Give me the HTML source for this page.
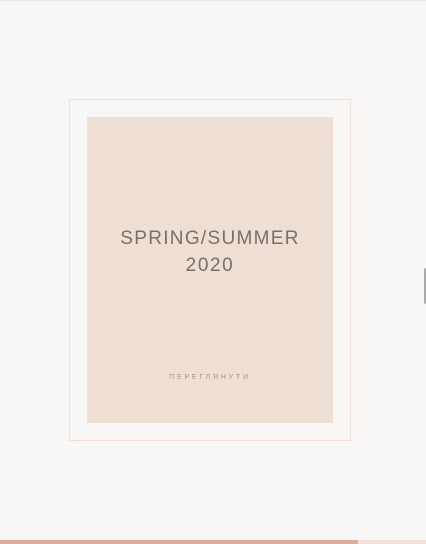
<!DOCTYPE html>
<html><head><meta charset="utf-8"><style>
html,body{margin:0;padding:0;width:426px;height:544px;overflow:hidden;background:#f9f7f5;}
body{position:relative;font-family:"Liberation Sans",sans-serif;}
.top{position:absolute;left:0;top:0;width:426px;height:1px;background:#ebe8e5;}
.frame{position:absolute;left:69px;top:99px;width:280px;height:340px;border:1px solid #f2ddd0;}
.box{position:absolute;left:87px;top:117px;width:246px;height:306px;background:#efdfd3;}
.t1{position:absolute;left:0;width:246px;text-align:center;top:111px;font-size:19px;letter-spacing:1.3px;color:#75706d;line-height:22px;}
.t2{position:absolute;left:0;width:246px;text-align:center;top:138px;font-size:19px;letter-spacing:1.6px;color:#75706d;line-height:22px;}
.t3{position:absolute;left:0;width:246px;text-align:center;top:256px;font-size:7px;letter-spacing:2.8px;color:#9c9490;line-height:10px;}
.knob{position:absolute;left:424px;top:268px;width:3px;height:36px;background:#a9a9a9;border-radius:2px 0 0 2px;}
.bar{position:absolute;left:0;top:540px;width:426px;height:4px;background:#f1e1d6;}
.bar i{position:absolute;left:0;top:0;width:358px;height:4px;background:#dbb092;}
</style></head><body>
<div class="top"></div>
<div class="frame"></div>
<div class="box">
<div class="t1">SPRING/SUMMER</div>
<div class="t2">2020</div>
<div class="t3">ПЕРЕГЛЯНУТИ</div>
</div>
<div class="knob"></div>
<div class="bar"><i></i></div>
</body></html>
